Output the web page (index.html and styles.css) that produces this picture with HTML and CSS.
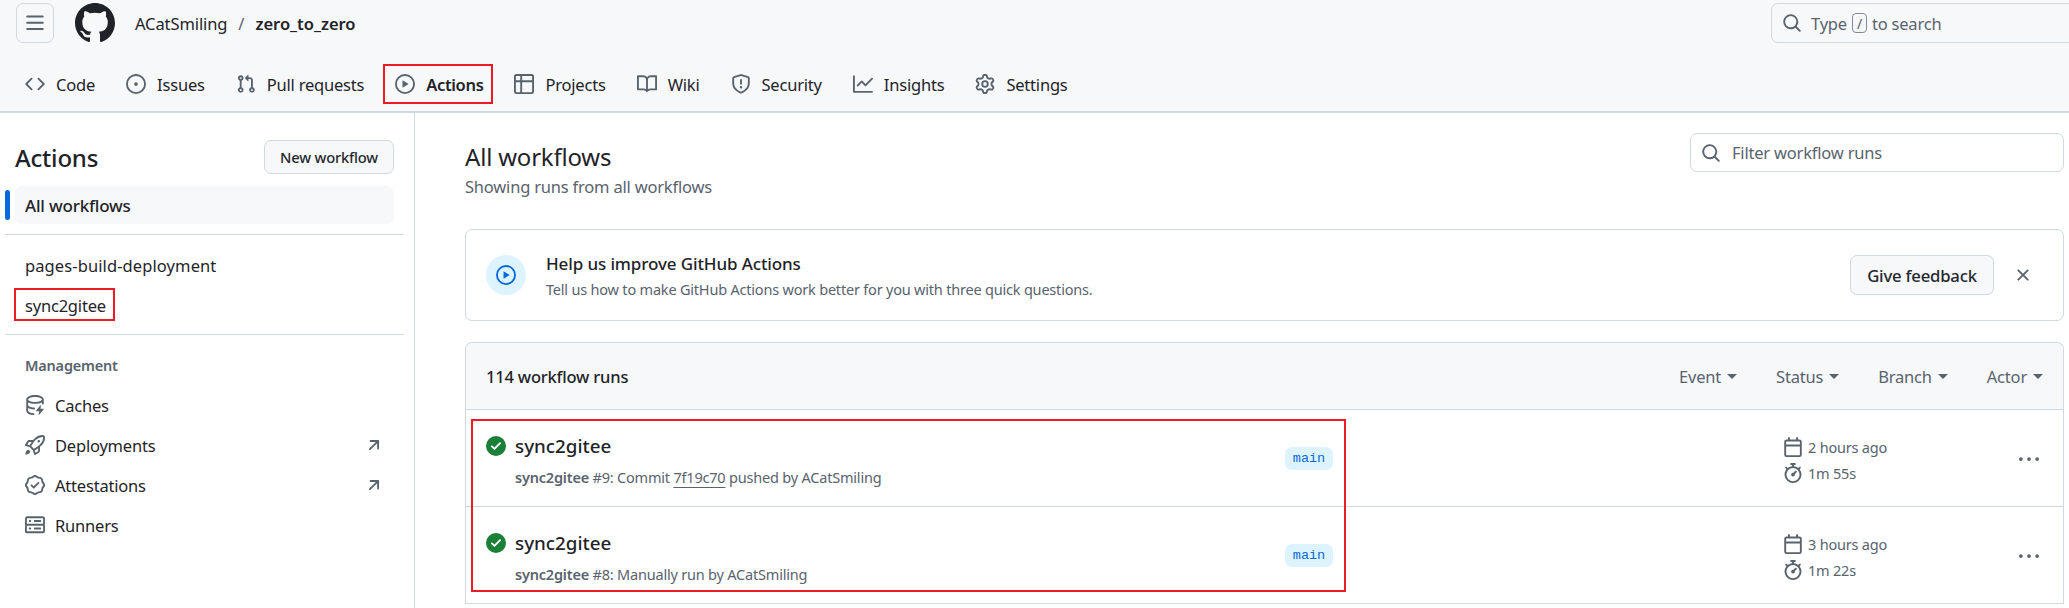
FILE: index.html
```html
<!DOCTYPE html>
<html lang="en">
<head>
    <meta charset="UTF-8">
    <meta name="viewport" content="width=device-width, initial-scale=1.0">
    <title>Actions - zero_to_zero</title>
    <link rel="stylesheet" href="styles.css">
</head>
<body>
    <svg class="sprite" xmlns="http://www.w3.org/2000/svg">
        <symbol id="i-bars" viewBox="0 0 16 16"><path d="M1 2.75A.75.75 0 0 1 1.75 2h12.5a.75.75 0 0 1 0 1.5H1.75A.75.75 0 0 1 1 2.75Zm0 5A.75.75 0 0 1 1.75 7h12.5a.75.75 0 0 1 0 1.5H1.75A.75.75 0 0 1 1 7.75ZM1.75 12h12.5a.75.75 0 0 1 0 1.5H1.75a.75.75 0 0 1 0-1.5Z"/></symbol>
        <symbol id="i-mark" viewBox="0 0 16 16"><path d="M8 0c4.42 0 8 3.58 8 8a8.013 8.013 0 0 1-5.45 7.59c-.4.08-.55-.17-.55-.38 0-.27.01-1.13.01-2.2 0-.75-.25-1.23-.54-1.48 1.78-.2 3.65-.88 3.65-3.95 0-.88-.31-1.59-.82-2.15.08-.2.36-1.02-.08-2.12 0 0-.67-.22-2.2.82-.64-.18-1.32-.27-2-.27-.68 0-1.36.09-2 .27-1.53-1.03-2.2-.82-2.2-.82-.44 1.1-.16 1.92-.08 2.12-.51.56-.82 1.28-.82 2.15 0 3.06 1.86 3.75 3.64 3.95-.23.2-.44.55-.51 1.07-.46.21-1.61.55-2.33-.66-.15-.24-.6-.83-1.23-.82-.67.01-.27.38.01.53.34.19.73.9.82 1.13.16.45.68 1.31 2.69.94 0 .67.01 1.3.01 1.49 0 .21-.15.45-.55.38A7.995 7.995 0 0 1 0 8c0-4.42 3.58-8 8-8Z"/></symbol>
        <symbol id="i-code" viewBox="0 0 16 16"><path d="m11.28 3.22 4.25 4.25a.75.75 0 0 1 0 1.06l-4.25 4.25a.749.749 0 0 1-1.275-.326.749.749 0 0 1 .215-.734L13.94 8l-3.72-3.72a.749.749 0 0 1 .326-1.275.749.749 0 0 1 .734.215Zm-6.56 0a.751.751 0 0 1 1.042.018.751.751 0 0 1 .018 1.042L2.06 8l3.72 3.72a.749.749 0 0 1-.326 1.275.749.749 0 0 1-.734-.215L.47 8.53a.75.75 0 0 1 0-1.06Z"/></symbol>
        <symbol id="i-issue" viewBox="0 0 16 16"><path d="M8 9.5a1.5 1.5 0 1 0 0-3 1.5 1.5 0 0 0 0 3Z"/><path d="M8 0a8 8 0 1 1 0 16A8 8 0 0 1 8 0ZM1.5 8a6.5 6.5 0 1 0 13 0 6.5 6.5 0 0 0-13 0Z"/></symbol>
        <symbol id="i-pull" viewBox="0 0 16 16"><path d="M1.5 3.25a2.25 2.25 0 1 1 3 2.122v5.256a2.251 2.251 0 1 1-1.5 0V5.372A2.25 2.25 0 0 1 1.5 3.25Zm5.677-.177L9.573.677A.25.25 0 0 1 10 .854V2.5h1A2.5 2.5 0 0 1 13.5 5v5.628a2.251 2.251 0 1 1-1.5 0V5a1 1 0 0 0-1-1h-1v1.646a.25.25 0 0 1-.427.177L7.177 3.427a.25.25 0 0 1 0-.354ZM3.75 2.5a.75.75 0 1 0 0 1.5.75.75 0 0 0 0-1.5Zm0 9.5a.75.75 0 1 0 0 1.5.75.75 0 0 0 0-1.5Zm8.25.75a.75.75 0 1 0 1.5 0 .75.75 0 0 0-1.5 0Z"/></symbol>
        <symbol id="i-play" viewBox="0 0 16 16"><path d="M8 0a8 8 0 1 1 0 16A8 8 0 0 1 8 0ZM1.5 8a6.5 6.5 0 1 0 13 0 6.5 6.5 0 0 0-13 0Zm4.879-2.773 4.264 2.559a.25.25 0 0 1 0 .428l-4.264 2.559A.25.25 0 0 1 6 10.559V5.442a.25.25 0 0 1 .379-.215Z"/></symbol>
        <symbol id="i-table" viewBox="0 0 16 16"><path d="M0 1.75C0 .784.784 0 1.75 0h12.5C15.216 0 16 .784 16 1.75v12.5A1.75 1.75 0 0 1 14.25 16H1.75A1.75 1.75 0 0 1 0 14.25ZM6.5 6.5v8h7.75a.25.25 0 0 0 .25-.25V6.5Zm8-1.5V1.75a.25.25 0 0 0-.25-.25H6.5V5Zm-13 1.5v7.75c0 .138.112.25.25.25H5v-8ZM5 5V1.5H1.75a.25.25 0 0 0-.25.25V5Z"/></symbol>
        <symbol id="i-book" viewBox="0 0 16 16"><path d="M0 1.75A.75.75 0 0 1 .75 1h4.253c1.227 0 2.317.59 3 1.501A3.743 3.743 0 0 1 11.006 1h4.245a.75.75 0 0 1 .75.75v10.5a.75.75 0 0 1-.75.75h-4.507a2.25 2.25 0 0 0-1.591.659l-.622.621a.75.75 0 0 1-1.06 0l-.622-.621A2.25 2.25 0 0 0 5.258 13H.75a.75.75 0 0 1-.75-.75Zm7.251 10.324.004-5.073-.002-2.253A2.25 2.25 0 0 0 5.003 2.5H1.5v9h3.757a3.75 3.75 0 0 1 1.994.574ZM8.755 4.75l-.004 7.322a3.752 3.752 0 0 1 1.992-.572H14.5v-9h-3.495a2.25 2.25 0 0 0-2.25 2.25Z"/></symbol>
        <symbol id="i-shield" viewBox="0 0 16 16"><path d="M7.467.133a1.748 1.748 0 0 1 1.066 0l5.25 1.68A1.75 1.75 0 0 1 15 3.48V7c0 1.566-.32 3.182-1.303 4.682-.983 1.498-2.585 2.813-5.032 3.855a1.697 1.697 0 0 1-1.33 0c-2.447-1.042-4.049-2.357-5.032-3.855C1.32 10.182 1 8.566 1 7V3.48a1.75 1.75 0 0 1 1.217-1.667Zm.61 1.429a.25.25 0 0 0-.153 0l-5.25 1.68a.25.25 0 0 0-.174.238V7c0 1.358.275 2.666 1.057 3.86.784 1.194 2.121 2.34 4.366 3.297a.196.196 0 0 0 .154 0c2.245-.956 3.582-2.104 4.366-3.298C13.225 9.666 13.5 8.36 13.5 7V3.48a.251.251 0 0 0-.174-.237l-5.25-1.68ZM8.75 4.75v3a.75.75 0 0 1-1.5 0v-3a.75.75 0 0 1 1.5 0ZM9 10.5a1 1 0 1 1-2 0 1 1 0 0 1 2 0Z"/></symbol>
        <symbol id="i-graph" viewBox="0 0 16 16"><path d="M1.5 1.75V13.5h13.75a.75.75 0 0 1 0 1.5H.75a.75.75 0 0 1-.75-.75V1.75a.75.75 0 0 1 1.5 0Zm14.28 2.53-5.25 5.25a.75.75 0 0 1-1.06 0L7 7.06 4.28 9.78a.751.751 0 0 1-1.042-.018.751.751 0 0 1-.018-1.042l3.25-3.25a.75.75 0 0 1 1.06 0L10 7.94l4.72-4.72a.751.751 0 0 1 1.042.018.751.751 0 0 1 .018 1.042Z"/></symbol>
        <symbol id="i-gear" viewBox="0 0 16 16"><path d="M8 0a8.2 8.2 0 0 1 .701.031C9.444.095 9.99.645 10.16 1.29l.288 1.107c.018.066.079.158.212.224.231.114.454.243.668.386.123.082.233.09.299.071l1.103-.303c.644-.176 1.392.021 1.82.63.27.385.506.792.704 1.218.315.675.111 1.422-.364 1.891l-.814.806c-.049.048-.098.147-.088.294.016.257.016.515 0 .772-.01.147.038.246.088.294l.814.806c.475.469.679 1.216.364 1.891a7.977 7.977 0 0 1-.704 1.217c-.428.61-1.176.807-1.82.63l-1.102-.302c-.067-.019-.177-.011-.3.071a5.909 5.909 0 0 1-.668.386c-.133.066-.194.158-.211.224l-.29 1.106c-.168.646-.715 1.196-1.458 1.26a8.006 8.006 0 0 1-1.402 0c-.743-.064-1.289-.614-1.458-1.26l-.289-1.106c-.018-.066-.079-.158-.212-.224a5.738 5.738 0 0 1-.668-.386c-.123-.082-.233-.09-.299-.071l-1.103.303c-.644.176-1.392-.021-1.82-.63a8.12 8.12 0 0 1-.704-1.218c-.315-.675-.111-1.422.363-1.891l.815-.806c.05-.048.098-.147.088-.294a6.214 6.214 0 0 1 0-.772c.01-.147-.038-.246-.088-.294l-.815-.806C.635 6.045.431 5.298.746 4.623a7.92 7.92 0 0 1 .704-1.217c.428-.61 1.176-.807 1.82-.63l1.102.302c.067.019.177.011.3-.071.214-.143.437-.272.668-.386.133-.066.194-.158.211-.224l.29-1.106C6.009.645 6.556.095 7.299.03 7.53.01 7.764 0 8 0Zm-.571 1.525c-.036.003-.108.036-.137.146l-.289 1.105c-.147.561-.549.967-.998 1.189-.173.086-.34.183-.5.29-.417.278-.97.423-1.529.27l-1.103-.303c-.109-.03-.175.016-.195.045-.22.312-.412.644-.573.99-.014.031-.021.11.059.19l.815.806c.411.406.562.957.53 1.456a4.709 4.709 0 0 0 0 .582c.032.499-.119 1.05-.53 1.456l-.815.806c-.081.08-.073.159-.059.19.162.346.353.677.573.989.02.03.085.076.195.046l1.102-.303c.56-.153 1.113-.008 1.53.27.161.107.328.204.501.29.447.222.85.629.997 1.189l.289 1.105c.029.109.101.143.137.146a6.6 6.6 0 0 0 1.142 0c.036-.003.108-.036.137-.146l.289-1.105c.147-.561.549-.967.998-1.189.173-.086.34-.183.5-.29.417-.278.97-.423 1.529-.27l1.103.303c.109.029.175-.016.195-.045.22-.313.411-.644.573-.99.014-.031.021-.11-.059-.19l-.815-.806c-.411-.406-.562-.957-.53-1.456a4.709 4.709 0 0 0 0-.582c-.032-.499.119-1.05.53-1.456l.815-.806c.081-.08.073-.159.059-.19a6.464 6.464 0 0 0-.573-.989c-.02-.03-.085-.076-.195-.046l-1.102.303c-.56.153-1.113.008-1.53-.27a4.44 4.44 0 0 0-.501-.29c-.447-.222-.85-.629-.997-1.189l-.289-1.105c-.029-.11-.101-.143-.137-.146a6.6 6.6 0 0 0-1.142 0ZM11 8a3 3 0 1 1-6 0 3 3 0 0 1 6 0ZM9.5 8a1.5 1.5 0 1 0-3.001.001A1.5 1.5 0 0 0 9.5 8Z"/></symbol>
        <symbol id="i-search" viewBox="0 0 16 16"><path d="M10.68 11.74a6 6 0 0 1-7.922-8.982 6 6 0 0 1 8.982 7.922l3.04 3.04a.749.749 0 0 1-.326 1.275.749.749 0 0 1-.734-.215ZM11.5 7a4.499 4.499 0 1 0-8.997 0A4.499 4.499 0 0 0 11.5 7Z"/></symbol>
        <symbol id="i-x" viewBox="0 0 16 16"><path d="M3.72 3.72a.75.75 0 0 1 1.06 0L8 6.94l3.22-3.22a.749.749 0 0 1 1.275.326.749.749 0 0 1-.215.734L9.06 8l3.22 3.22a.749.749 0 0 1-.326 1.275.749.749 0 0 1-.734-.215L8 9.06l-3.22 3.22a.751.751 0 0 1-1.042-.018.751.751 0 0 1-.018-1.042L6.94 8 3.72 4.78a.75.75 0 0 1 0-1.06Z"/></symbol>
        <symbol id="i-check" viewBox="0 0 16 16"><path d="M8 16A8 8 0 1 1 8 0a8 8 0 0 1 0 16Zm3.78-9.72a.751.751 0 0 0-.018-1.042.751.751 0 0 0-1.042-.018L6.75 9.19 5.28 7.72a.751.751 0 0 0-1.042.018.751.751 0 0 0-.018 1.042l2 2a.75.75 0 0 0 1.06 0Z"/></symbol>
        <symbol id="i-calendar" viewBox="0 0 16 16"><path d="M4.75 0a.75.75 0 0 1 .75.75V2h5V.75a.75.75 0 0 1 1.5 0V2h1.25c.966 0 1.75.784 1.75 1.75v10.5A1.75 1.75 0 0 1 13.25 16H2.75A1.75 1.75 0 0 1 1 14.25V3.75C1 2.784 1.784 2 2.75 2H4V.75A.75.75 0 0 1 4.75 0ZM2.5 7.5v6.75c0 .138.112.25.25.25h10.5a.25.25 0 0 0 .25-.25V7.5Zm10.75-4H2.75a.25.25 0 0 0-.25.25V6h11V3.75a.25.25 0 0 0-.25-.25Z"/></symbol>
        <symbol id="i-watch" viewBox="0 0 16 16"><path d="M5.75.75A.75.75 0 0 1 6.5 0h3a.75.75 0 0 1 0 1.5h-.75v1l-.001.041a6.724 6.724 0 0 1 3.464 1.435l.007-.006.75-.75a.749.749 0 0 1 1.275.326.749.749 0 0 1-.215.734l-.75.75-.006.007a6.75 6.75 0 1 1-10.548 0L2.72 5.03l-.75-.75a.751.751 0 0 1 .018-1.042.751.751 0 0 1 1.042-.018l.75.75.007.006A6.72 6.72 0 0 1 7.25 2.541V1.5H6.5a.75.75 0 0 1-.75-.75ZM8 14.5a5.25 5.25 0 1 0-.001-10.501A5.25 5.25 0 0 0 8 14.5Zm.389-6.7 1.33-1.33a.75.75 0 1 1 1.061 1.06L9.45 8.861A1.503 1.503 0 0 1 8 10.75a1.499 1.499 0 1 1 .389-2.95Z"/></symbol>
        <symbol id="i-kebab" viewBox="0 0 16 16"><path d="M8 9.5a1.5 1.5 0 1 0 0-3 1.5 1.5 0 0 0 0 3ZM1.5 9.5a1.5 1.5 0 1 0 0-3 1.5 1.5 0 0 0 0 3Zm13 0a1.5 1.5 0 1 0 0-3 1.5 1.5 0 0 0 0 3Z"/></symbol>
        <symbol id="i-cache" viewBox="0 0 16 16"><path d="M1 3.5C1 1.5 4.1 0 8 0s7 1.5 7 3.5v3.25a.75.75 0 0 1-1.5 0V5.9C12.2 6.6 10.2 7 8 7s-4.2-.4-5.5-1.1V8c0 .9 2 1.9 4.8 2a.75.75 0 0 1 0 1.5c-1.9-.1-3.6-.5-4.8-1.2v2.2c0 .9 1.8 1.8 4.4 2a.75.75 0 0 1-.1 1.5C3.3 15.7 1 14.3 1 12.5Zm1.5 0c0 .9 2.3 2 5.5 2s5.5-1.1 5.5-2-2.3-2-5.5-2-5.5 1.1-5.5 2Z"/><path d="M12.3 8.2a.3.3 0 0 1 .5.25L12.3 11h2.4a.3.3 0 0 1 .2.5l-3.5 4.3a.3.3 0 0 1-.5-.25l.5-2.55H9a.3.3 0 0 1-.2-.5Z"/></symbol>
        <symbol id="i-rocket" viewBox="0 0 16 16"><path d="M14.064 0h.186C15.216 0 16 .784 16 1.75v.186a8.752 8.752 0 0 1-2.564 6.186l-.458.459c-.314.314-.641.616-.979.904v3.207c0 .608-.315 1.172-.833 1.49l-2.774 1.707a.749.749 0 0 1-1.11-.418l-.954-3.102a1.214 1.214 0 0 1-.145-.125L3.754 9.816a1.218 1.218 0 0 1-.124-.145L.528 8.717a.749.749 0 0 1-.418-1.11l1.71-2.774A1.748 1.748 0 0 1 3.31 4h3.204c.288-.338.59-.665.904-.979l.459-.458A8.749 8.749 0 0 1 14.064 0ZM8.938 3.623h-.002l-.458.458c-.76.76-1.437 1.598-2.02 2.5l-1.5 2.317 2.143 2.143 2.317-1.5c.902-.583 1.74-1.26 2.499-2.02l.459-.458a7.25 7.25 0 0 0 2.123-5.127V1.75a.25.25 0 0 0-.25-.25h-.186a7.249 7.249 0 0 0-5.125 2.123ZM3.56 14.56c-.732.732-2.334 1.045-3.005 1.148a.234.234 0 0 1-.201-.064.234.234 0 0 1-.064-.201c.103-.671.416-2.273 1.15-3.003a1.502 1.502 0 1 1 2.12 2.12Zm6.94-3.935c-.088.06-.177.118-.266.175l-2.35 1.521.548 1.783 1.949-1.2a.25.25 0 0 0 .119-.213ZM3.678 8.116 5.2 5.766c.058-.09.117-.178.176-.266H3.309a.25.25 0 0 0-.213.119l-1.2 1.95ZM12 5a1 1 0 1 1-2 0 1 1 0 0 1 2 0Z"/></symbol>
        <symbol id="i-verified" viewBox="0 0 16 16"><path d="m9.585.52.929.68c.153.112.331.186.518.215l1.138.175a2.678 2.678 0 0 1 2.24 2.24l.174 1.139c.029.187.103.365.215.518l.68.928a2.677 2.677 0 0 1 0 3.17l-.68.928a1.174 1.174 0 0 0-.215.518l-.175 1.138a2.678 2.678 0 0 1-2.241 2.241l-1.138.175a1.17 1.17 0 0 0-.518.215l-.928.68a2.677 2.677 0 0 1-3.17 0l-.928-.68a1.174 1.174 0 0 0-.518-.215L3.83 14.41a2.678 2.678 0 0 1-2.24-2.24l-.175-1.138a1.17 1.17 0 0 0-.215-.518l-.68-.928a2.677 2.677 0 0 1 0-3.17l.68-.928c.112-.153.186-.331.215-.518l.175-1.14a2.678 2.678 0 0 1 2.24-2.24l1.139-.175c.187-.029.365-.103.518-.215l.928-.68a2.677 2.677 0 0 1 3.17 0ZM7.303 1.728l-.927.68a2.67 2.67 0 0 1-1.18.489l-1.137.174a1.179 1.179 0 0 0-.987.987l-.174 1.136a2.677 2.677 0 0 1-.489 1.18l-.68.928a1.18 1.18 0 0 0 0 1.394l.68.927c.256.348.424.753.489 1.18l.174 1.137c.078.509.478.909.987.987l1.136.174a2.67 2.67 0 0 1 1.18.489l.928.68c.414.305.979.305 1.394 0l.927-.68a2.67 2.67 0 0 1 1.18-.489l1.137-.174a1.18 1.18 0 0 0 .987-.987l.174-1.136a2.67 2.67 0 0 1 .489-1.18l.68-.928a1.176 1.176 0 0 0 0-1.394l-.68-.927a2.686 2.686 0 0 1-.489-1.18l-.174-1.137a1.179 1.179 0 0 0-.987-.987l-1.136-.174a2.677 2.677 0 0 1-1.18-.489l-.928-.68a1.176 1.176 0 0 0-1.394 0ZM11.28 6.78l-3.75 3.75a.75.75 0 0 1-1.06 0L4.72 8.78a.751.751 0 0 1 .018-1.042.751.751 0 0 1 1.042-.018l1.22 1.22 3.22-3.22a.751.751 0 0 1 1.042.018.751.751 0 0 1 .018 1.042Z"/></symbol>
        <symbol id="i-server" viewBox="0 0 16 16"><path d="M1.75 1h12.5c.966 0 1.75.784 1.75 1.75v4c0 .372-.116.717-.314 1 .198.283.314.628.314 1v4a1.75 1.75 0 0 1-1.75 1.75H1.75A1.75 1.75 0 0 1 0 13.75v-4c0-.372.116-.717.314-1a1.739 1.739 0 0 1-.314-1v-4C0 1.784.784 1 1.75 1ZM1.5 2.75v4c0 .138.112.25.25.25h12.5a.25.25 0 0 0 .25-.25v-4a.25.25 0 0 0-.25-.25H1.75a.25.25 0 0 0-.25.25Zm.25 5.75a.25.25 0 0 0-.25.25v4c0 .138.112.25.25.25h12.5a.25.25 0 0 0 .25-.25v-4a.25.25 0 0 0-.25-.25ZM7 4.75A.75.75 0 0 1 7.75 4h4.5a.75.75 0 0 1 0 1.5h-4.5A.75.75 0 0 1 7 4.75ZM7.75 10h4.5a.75.75 0 0 1 0 1.5h-4.5a.75.75 0 0 1 0-1.5ZM3 4.75A.75.75 0 0 1 3.75 4h.5a.75.75 0 0 1 0 1.5h-.5A.75.75 0 0 1 3 4.75ZM3.75 10h.5a.75.75 0 0 1 0 1.5h-.5a.75.75 0 0 1 0-1.5Z"/></symbol>
        <symbol id="i-arrow" viewBox="0 0 16 16"><path d="M4.53 4.75A.75.75 0 0 1 5.28 4h6.01a.75.75 0 0 1 .75.75v6.01a.75.75 0 0 1-1.5 0v-4.2l-5.26 5.261a.749.749 0 0 1-1.275-.326.749.749 0 0 1 .215-.734L9.48 5.5h-4.2a.75.75 0 0 1-.75-.75Z"/></symbol>
    </svg>

    <header class="app-header">
        <div class="top-row">
            <button class="icon-btn"><svg class="icon"><use href="#i-bars"/></svg></button>
            <svg class="logo"><use href="#i-mark"/></svg>
            <div class="repo-path">
                <span>ACatSmiling</span>
                <span class="slash">/</span>
                <strong>zero_to_zero</strong>
            </div>
            <div class="search top-search">
                <svg class="icon"><use href="#i-search"/></svg>
                <span>Type</span><kbd>/</kbd><span>to search</span>
            </div>
        </div>
        <nav class="tabs">
            <a class="tab"><svg class="icon"><use href="#i-code"/></svg>Code</a>
            <a class="tab"><svg class="icon"><use href="#i-issue"/></svg>Issues</a>
            <a class="tab"><svg class="icon"><use href="#i-pull"/></svg>Pull requests</a>
            <a class="tab tab-current"><svg class="icon"><use href="#i-play"/></svg>Actions<span class="mark-tab"></span></a>
            <a class="tab"><svg class="icon"><use href="#i-table"/></svg>Projects</a>
            <a class="tab"><svg class="icon"><use href="#i-book"/></svg>Wiki</a>
            <a class="tab"><svg class="icon"><use href="#i-shield"/></svg>Security</a>
            <a class="tab"><svg class="icon"><use href="#i-graph"/></svg>Insights</a>
            <a class="tab"><svg class="icon"><use href="#i-gear"/></svg>Settings</a>
        </nav>
    </header>

    <div class="layout">
        <aside class="sidebar">
            <div class="side-head">
                <h2>Actions</h2>
                <button class="btn btn-small">New workflow</button>
            </div>
            <div class="side-current">All workflows</div>
            <ul class="side-list workflows">
                <li>pages-build-deployment</li>
                <li class="marked"><span class="mark-name"></span>sync2gitee</li>
            </ul>
            <div class="side-label">Management</div>
            <ul class="side-list">
                <li><svg class="icon"><use href="#i-cache"/></svg>Caches</li>
                <li><svg class="icon"><use href="#i-rocket"/></svg>Deployments<svg class="arrow"><use href="#i-arrow"/></svg></li>
                <li><svg class="icon"><use href="#i-verified"/></svg>Attestations<svg class="arrow"><use href="#i-arrow"/></svg></li>
                <li><svg class="icon"><use href="#i-server"/></svg>Runners</li>
            </ul>
        </aside>

        <main class="content">
            <div class="title-row">
                <div>
                    <h1>All workflows</h1>
                    <p class="subtitle">Showing runs from all workflows</p>
                </div>
                <div class="search filter-search">
                    <svg class="icon"><use href="#i-search"/></svg>
                    <span>Filter workflow runs</span>
                </div>
            </div>

            <section class="banner">
                <div class="banner-icon"><svg class="icon"><use href="#i-play"/></svg></div>
                <div class="banner-text">
                    <h3>Help us improve GitHub Actions</h3>
                    <p>Tell us how to make GitHub Actions work better for you with three quick questions.</p>
                </div>
                <button class="btn btn-feedback">Give feedback</button>
                <svg class="icon close"><use href="#i-x"/></svg>
            </section>

            <section class="runs">
                <div class="runs-head">
                    <strong>114 workflow runs</strong>
                    <div class="filters">
                        <span>Event<i class="caret"></i></span>
                        <span>Status<i class="caret"></i></span>
                        <span>Branch<i class="caret"></i></span>
                        <span>Actor<i class="caret"></i></span>
                    </div>
                </div>
                <div class="run-list">
                    <span class="mark-runs"></span>
                    <div class="run">
                        <svg class="icon run-status"><use href="#i-check"/></svg>
                        <div class="run-info">
                            <div class="run-title">sync2gitee</div>
                            <div class="run-sub"><b>sync2gitee</b> #9: Commit <u>7f19c70</u> pushed by ACatSmiling</div>
                        </div>
                        <span class="branch">main</span>
                        <div class="run-meta">
                            <div><svg class="icon"><use href="#i-calendar"/></svg>2 hours ago</div>
                            <div><svg class="icon"><use href="#i-watch"/></svg>1m 55s</div>
                        </div>
                        <svg class="icon kebab"><use href="#i-kebab"/></svg>
                    </div>
                    <div class="run">
                        <svg class="icon run-status"><use href="#i-check"/></svg>
                        <div class="run-info">
                            <div class="run-title">sync2gitee</div>
                            <div class="run-sub"><b>sync2gitee</b> #8: Manually run by ACatSmiling</div>
                        </div>
                        <span class="branch">main</span>
                        <div class="run-meta">
                            <div><svg class="icon"><use href="#i-calendar"/></svg>3 hours ago</div>
                            <div><svg class="icon"><use href="#i-watch"/></svg>1m 22s</div>
                        </div>
                        <svg class="icon kebab"><use href="#i-kebab"/></svg>
                    </div>
                </div>
            </section>
        </main>
    </div>
</body>
</html>
```

FILE: styles.css
```css
* {
    box-sizing: border-box;
}

body {
    margin: 0;
    height: 100vh;
    overflow: hidden;
    font-family: "Noto Sans", "Open Sans", sans-serif;
    font-size: 16.5px;
    letter-spacing: -0.2px;
    color: #1f2328;
    background-color: white;
}

h1, h2, h3, p, ul {
    margin: 0;
    padding: 0;
    font-weight: 400;
}

ul {
    list-style: none;
}

button {
    font-family: inherit;
    letter-spacing: inherit;
}

.sprite {
    display: none;
}

.icon {
    width: 20px;
    height: 20px;
    flex: none;
    fill: #59636e;
}

/* top header */
.app-header {
    height: 113px;
    background-color: #f6f8fa;
    border-bottom: 2px solid #d1d9e0;
    overflow: hidden;
}

.top-row {
    display: flex;
    align-items: center;
    height: 46px;
    padding: 3px 0 3px 16px;
}

.icon-btn {
    display: flex;
    align-items: center;
    justify-content: center;
    width: 38px;
    height: 40px;
    padding: 0;
    background-color: transparent;
    border: 1px solid #d1d9e0;
    border-radius: 7px;
}

.logo {
    width: 40px;
    height: 40px;
    margin-left: 21px;
    fill: #1f2328;
}

.repo-path {
    display: flex;
    gap: 11px;
    margin-left: 20px;
    letter-spacing: -0.1px;
}

.repo-path strong {
    font-weight: 600;
    letter-spacing: 0;
}

.slash {
    color: #59636e;
}

.search {
    display: flex;
    align-items: center;
    background-color: transparent;
    border: 1px solid #d1d9e0;
    color: #59636e;
}

.top-search {
    width: 320px;
    height: 40px;
    margin-left: auto;
    margin-right: -22px;
    padding-left: 10px;
    border-radius: 7px;
}

.top-search .icon {
    margin-right: 9px;
}

kbd {
    display: flex;
    align-items: center;
    justify-content: center;
    width: 15px;
    height: 20px;
    margin: 0 5px;
    border: 1px solid #818b98;
    border-radius: 4px;
    font-family: inherit;
    font-size: 14px;
}

/* repo tabs */
.tabs {
    display: flex;
    gap: 11px;
    padding: 18px 0 0 15px;
    letter-spacing: -0.2px;
}

.tab {
    position: relative;
    display: flex;
    align-items: center;
    gap: 11px;
    height: 40px;
    padding: 0 10px;
}

.tab-current {
    font-weight: 600;
    letter-spacing: -0.35px;
}

.tab-current::after {
    content: "";
    position: absolute;
    left: 0;
    right: 0;
    top: 47px;
    height: 2px;
    background-color: #fd8c73;
}

.mark-tab, .mark-name, .mark-runs {
    position: absolute;
    border: 2px solid #ed1c24;
}

.mark-tab {
    inset: 0 0 0 -2px;
}

/* sidebar */
.layout {
    display: flex;
    height: calc(100vh - 113px);
}

.sidebar {
    width: 415px;
    flex: none;
    padding: 27px 10px 0 5px;
    border-right: 1px solid #d1d9e0;
}

.side-head {
    display: flex;
    align-items: center;
    justify-content: space-between;
    padding: 0 10px;
}

.side-head h2 {
    font-size: 24px;
    font-weight: 500;
}

.btn {
    background-color: #f6f8fa;
    border: 1px solid #d1d9e0;
    border-radius: 7px;
    color: #25292e;
}

.btn-small {
    width: 130px;
    height: 34px;
    padding: 0;
    font-size: 14.7px;
    font-weight: 500;
}

.side-current {
    position: relative;
    display: flex;
    align-items: center;
    height: 38px;
    margin: 12px 10px 10px;
    padding-left: 10px;
    background-color: #f6f8fa;
    border-radius: 7px;
    font-size: 17px;
    font-weight: 500;
}

.side-current::before {
    content: "";
    position: absolute;
    left: -10px;
    top: 4px;
    bottom: 4px;
    width: 5px;
    background-color: #0969da;
    border-radius: 5px;
}

.workflows {
    padding: 10px 0 9px;
    border-top: 1px solid #d1d9e0;
    border-bottom: 1px solid #d1d9e0;
}

.workflows li:first-child {
    letter-spacing: 0.1px;
}

.side-list li {
    position: relative;
    display: flex;
    align-items: center;
    gap: 10px;
    height: 40px;
    padding-left: 20px;
}

.mark-name {
    left: 9px;
    top: 3px;
    width: 101px;
    height: 33px;
}

.side-label {
    margin: 20px 0 10px;
    padding-left: 20px;
    font-size: 14.5px;
    font-weight: 600;
    line-height: 20px;
    color: #59636e;
}

.arrow {
    width: 20px;
    height: 20px;
    margin-left: auto;
    margin-right: 20px;
    fill: #59636e;
}

/* main column */
.content {
    flex: 1;
    min-width: 0;
    padding: 20px 5px 0 50px;
}

.title-row {
    display: flex;
    justify-content: space-between;
    margin-bottom: 30px;
}

.title-row h1 {
    margin-top: 9px;
    font-size: 24px;
    line-height: 30px;
}

.subtitle {
    margin-top: 3px;
    line-height: 24px;
    color: #59636e;
}

.filter-search {
    width: 374px;
    height: 39px;
    padding-left: 10px;
    gap: 11px;
    border-radius: 7px;
}

.banner {
    display: flex;
    align-items: center;
    height: 92px;
    padding: 0 30px 0 20px;
    border: 1px solid #d1d9e0;
    border-radius: 7px;
}

.banner-icon {
    display: flex;
    align-items: center;
    justify-content: center;
    width: 40px;
    height: 40px;
    background-color: #ddf4ff;
    border-radius: 50%;
}

.banner-icon .icon {
    fill: #0969da;
}

.banner-text {
    flex: 1;
    margin-left: 20px;
}

.banner-text h3 {
    font-size: 17px;
    font-weight: 500;
    letter-spacing: -0.12px;
    line-height: 24px;
}

.banner-text p {
    margin-top: 3px;
    font-size: 14.5px;
    line-height: 20px;
    color: #59636e;
}

.btn-feedback {
    width: 144px;
    height: 40px;
    padding: 0;
    font-size: 16.7px;
    font-weight: 500;
}

.close {
    margin-left: 19px;
}

/* runs table */
.runs {
    margin-top: 21px;
    border: 1px solid #d1d9e0;
    border-bottom: 0;
    border-radius: 7px 7px 0 0;
}

.runs-head {
    display: flex;
    align-items: center;
    justify-content: space-between;
    height: 67px;
    padding: 0 20px;
    background-color: #f6f8fa;
    border-bottom: 1px solid #d1d9e0;
    border-radius: 7px 7px 0 0;
}

.runs-head strong {
    font-weight: 500;
}

.filters {
    display: flex;
    gap: 39px;
    color: #59636e;
}

.filters span {
    display: flex;
    align-items: center;
}

.caret {
    width: 0;
    height: 0;
    margin-left: 6px;
    border-top: 5px solid #59636e;
    border-left: 5px solid transparent;
    border-right: 5px solid transparent;
}

.run-list {
    position: relative;
}

.mark-runs {
    left: 5px;
    top: 9px;
    width: 875px;
    height: 173px;
    z-index: 1;
}

.run {
    display: flex;
    height: 97px;
    padding: 26px 24px 0 20px;
    border-bottom: 1px solid #d1d9e0;
}

.run-status {
    fill: #1a7f37;
}

.run-info {
    width: 770px;
    margin-left: 9px;
    flex: none;
}

.run-title {
    margin-top: -2px;
    font-size: 18.8px;
    font-weight: 500;
    letter-spacing: 0;
    line-height: 24px;
}

.run-sub {
    margin-top: 9px;
    font-size: 14.5px;
    line-height: 20px;
    color: #59636e;
}

.run-sub b {
    font-weight: 600;
}

.run-sub u {
    text-underline-offset: 4px;
}

.branch {
    width: 48px;
    height: 23px;
    margin-top: 11px;
    background-color: #ddf4ff;
    border-radius: 7px;
    font-family: "Liberation Mono", monospace;
    font-size: 13.5px;
    letter-spacing: 0;
    line-height: 23px;
    text-align: center;
    color: #0969da;
}

.run-meta {
    width: 236px;
    margin-top: -2px;
    margin-left: auto;
    font-size: 14.5px;
    line-height: 26px;
    color: #59636e;
}

.run-meta div {
    display: flex;
    align-items: center;
    gap: 5px;
}

.kebab {
    margin-top: 13px;
}
```
